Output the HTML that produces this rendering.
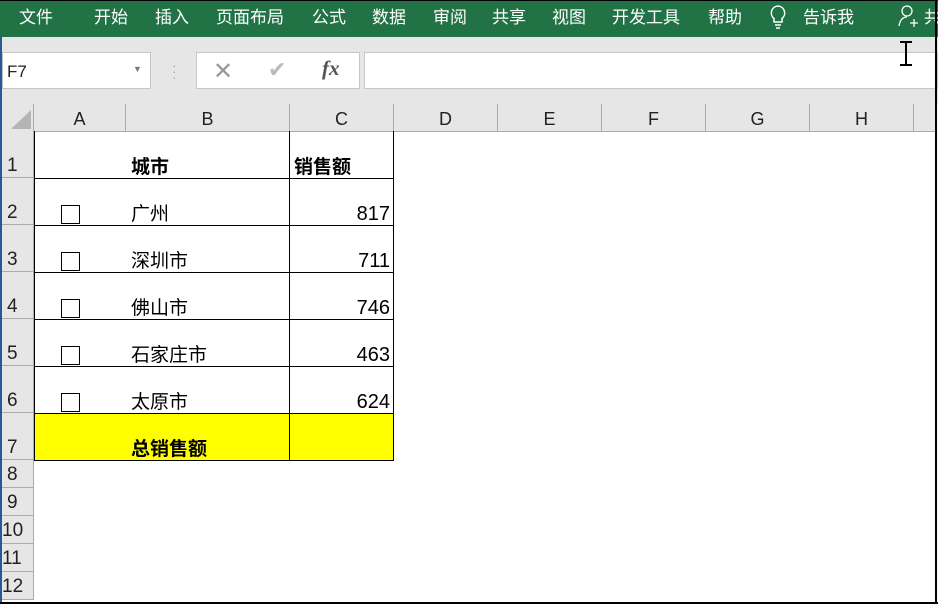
<!DOCTYPE html>
<html><head><meta charset="utf-8"><style>
*{margin:0;padding:0;box-sizing:border-box}
body{width:938px;height:604px;overflow:hidden;background:#fff;position:relative;font-family:"Liberation Sans","Noto Sans CJK SC",sans-serif}
.a{position:absolute}
#rib{left:0;top:0;width:938px;height:37px;background:#217346;color:#fff;font-size:17px}
#rib span{position:absolute;top:3px;white-space:nowrap}
#band{left:0;top:37px;width:938px;height:67px;background:#e6e6e6}
.box{background:#fff;border:1px solid #c6c6c6}
.hdr{background:#e6e6e6;color:#222;font-size:18px;text-align:center}
.ch{top:104px;height:28px;border-right:1px solid #ababab;border-bottom:1px solid #ababab;line-height:31px}
.rh{left:2px;width:32px;border-bottom:1px solid #ababab;border-right:1px solid #ababab;font-size:19px;text-align:left;padding-left:5px}
.hl{height:1px;background:#000;left:34px;width:360px}
.cb{left:61px;width:19px;height:19px;border:1px solid #000;background:#fff}
.t{font-size:19px;color:#000;white-space:nowrap}
.n{font-size:20px;color:#000;text-align:right;width:100px;left:290px}
</style></head><body>
<div class="a" id="rib">
<span style="left:19px">文件</span><span style="left:94px">开始</span><span style="left:155px">插入</span><span style="left:216px">页面布局</span><span style="left:312px">公式</span><span style="left:372px">数据</span><span style="left:433px">审阅</span><span style="left:492px">共享</span><span style="left:552px">视图</span><span style="left:612px">开发工具</span><span style="left:708px">帮助</span><span style="left:803px">告诉我</span><span style="left:924px">共</span>
<svg class="a" style="left:768px;top:4px" width="20" height="26" viewBox="0 0 20 26"><path d="M10 2a7 7 0 0 0-4 12.5V18h8v-3.5A7 7 0 0 0 10 2z" fill="none" stroke="#fff" stroke-width="1.5"/><path d="M7 21h6M8 24h4" stroke="#fff" stroke-width="1.5"/></svg>
<svg class="a" style="left:898px;top:4px" width="22" height="24" viewBox="0 0 22 24"><circle cx="9" cy="7" r="5" fill="none" stroke="#fff" stroke-width="1.3"/><path d="M1 22c1-6 4-9 8-9" fill="none" stroke="#fff" stroke-width="1.3"/><path d="M12 19h8M16 15v8" stroke="#fff" stroke-width="1.3"/></svg>
</div>
<div class="a" id="band"></div>
<div class="a box" style="left:2px;top:52px;width:149px;height:37px;font-size:17px;padding:9px 0 0 4px;color:#222">F7<span class="a" style="left:130px;top:11px;font-size:9px;color:#777">▼</span></div>
<div class="a" style="left:172px;top:62px;color:#aaa;font-size:14px;line-height:6px">·<br>·<br>·</div>
<div class="a box" style="left:196px;top:52px;width:164px;height:37px"></div>
<div class="a" style="left:213px;top:57px;font-size:24px;color:#999">✕</div>
<div class="a" style="left:268px;top:57px;font-size:22px;color:#bbb">✔</div>
<div class="a" style="left:322px;top:56px;font-size:21px;color:#555;font-family:'Liberation Serif',serif;font-style:italic;font-weight:bold">fx</div>
<div class="a box" style="left:364px;top:52px;width:574px;height:37px"></div>
<svg class="a" style="left:897px;top:41px" width="18" height="25"><path d="M3 1h12M3 24h12M9 1v23" stroke="#000" stroke-width="2"/></svg>
<div class="a hdr ch" style="left:2px;width:32px"></div>
<svg class="a" style="left:11px;top:110px" width="21" height="19"><path d="M20 0V19H0z" fill="#b5b5b5"/></svg>
<div class="a hdr ch" style="left:34px;width:92px">A</div>
<div class="a hdr ch" style="left:126px;width:164px">B</div>
<div class="a hdr ch" style="left:290px;width:104px">C</div>
<div class="a hdr ch" style="left:394px;width:104px">D</div>
<div class="a hdr ch" style="left:498px;width:104px">E</div>
<div class="a hdr ch" style="left:602px;width:104px">F</div>
<div class="a hdr ch" style="left:706px;width:104px">G</div>
<div class="a hdr ch" style="left:810px;width:104px">H</div>
<div class="a hdr ch" style="left:914px;width:22px;border-right:none"></div>
<div class="a hdr rh" style="top:131px;height:47px;padding-top:24px">1</div>
<div class="a hdr rh" style="top:178px;height:47px;padding-top:24px">2</div>
<div class="a hdr rh" style="top:225px;height:47px;padding-top:24px">3</div>
<div class="a hdr rh" style="top:272px;height:47px;padding-top:24px">4</div>
<div class="a hdr rh" style="top:319px;height:47px;padding-top:24px">5</div>
<div class="a hdr rh" style="top:366px;height:47px;padding-top:24px">6</div>
<div class="a hdr rh" style="top:413px;height:47px;padding-top:24px">7</div>
<div class="a hdr rh" style="top:460px;height:28px;padding-top:4px">8</div>
<div class="a hdr rh" style="top:488px;height:28px;padding-top:4px">9</div>
<div class="a hdr rh" style="top:516px;height:28px;padding-top:4px;padding-left:0">10</div>
<div class="a hdr rh" style="top:544px;height:28px;padding-top:4px;padding-left:0">11</div>
<div class="a hdr rh" style="top:572px;height:28px;padding-top:4px;padding-left:0">12</div>
<div class="a" style="left:0;top:37px;width:2px;height:567px;background:#2b5797"></div>
<div class="a" style="left:34px;top:413px;width:360px;height:47px;background:#ffff00"></div>
<div class="a" style="left:289px;top:131px;width:1px;height:330px;background:#000"></div>
<div class="a" style="left:393px;top:131px;width:1px;height:330px;background:#000"></div>
<div class="a" style="left:34px;top:131px;width:1px;height:330px;background:#000"></div>
<div class="a hl" style="top:178px"></div><div class="a hl" style="top:225px"></div><div class="a hl" style="top:272px"></div><div class="a hl" style="top:319px"></div><div class="a hl" style="top:366px"></div><div class="a hl" style="top:413px"></div><div class="a hl" style="top:460px"></div>
<div class="a t" style="left:131px;top:152px;font-weight:bold">城市</div>
<div class="a t" style="left:294px;top:152px;font-weight:bold">销售额</div>
<div class="a cb" style="top:205px"></div><div class="a t" style="left:131px;top:199px">广州</div><div class="a n" style="top:203px">817</div>
<div class="a cb" style="top:252px"></div><div class="a t" style="left:131px;top:246px">深圳市</div><div class="a n" style="top:250px">711</div>
<div class="a cb" style="top:299px"></div><div class="a t" style="left:131px;top:293px">佛山市</div><div class="a n" style="top:297px">746</div>
<div class="a cb" style="top:346px"></div><div class="a t" style="left:131px;top:340px">石家庄市</div><div class="a n" style="top:344px">463</div>
<div class="a cb" style="top:393px"></div><div class="a t" style="left:131px;top:387px">太原市</div><div class="a n" style="top:391px">624</div>
<div class="a t" style="left:131px;top:434px;font-weight:bold">总销售额</div>
<div class="a" style="left:935px;top:0;width:2px;height:604px;background:#000"></div>
<div class="a" style="left:0;top:602px;width:938px;height:2px;background:#000"></div>
<div class="a" style="left:0;top:0;width:938px;height:1px;background:#000"></div>
</body></html>
